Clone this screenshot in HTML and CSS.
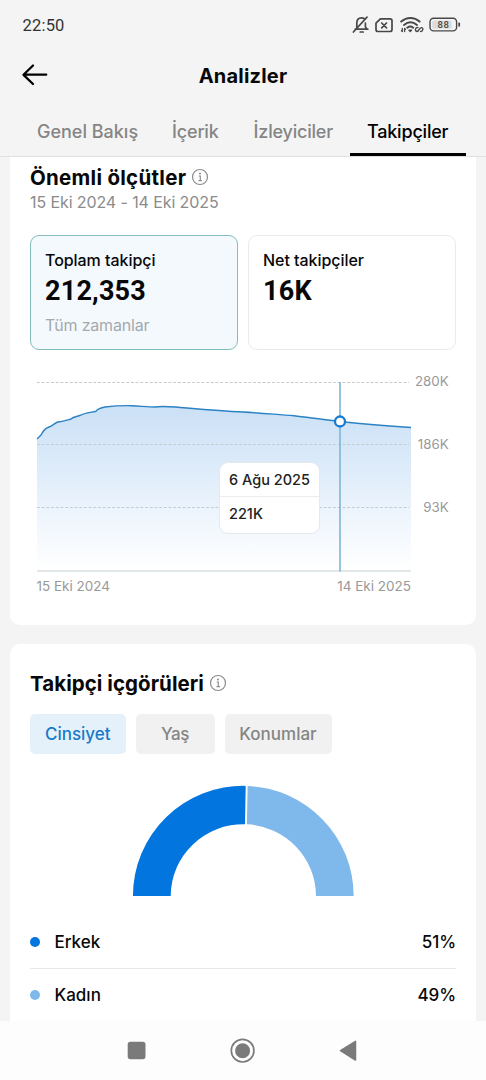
FILE: index.html
```
<!DOCTYPE html>
<html lang="tr">
<head>
<meta charset="utf-8">
<title>Analizler</title>
<link rel="stylesheet" href="styles.css">
</head>
<body>
<div class="screen">
  <div class="status">
    <span class="clock">22:50</span>
    <svg class="status-icons" width="110" height="20" viewBox="0 0 110 20" fill="none" stroke="#484848" stroke-width="1.7" stroke-linecap="round" stroke-linejoin="round">
      <path d="M3.2 14.2H15.8M4.8 14V8c0-3.2 2-5.2 4.8-5.2 1.2 0 2 .3 2.8.8M13.4 8.2V12l1.6 2M1.4 17L15 2.2M8.2 17h3"/>
      <path d="M28.4 3.8H38q2 0 2 2V14.500q0 2-2 2H26q-2 0-2-2V8.200z"/>
      <path d="M29.700 8l4.800 4.800M34.500 8l-4.800 4.800"/>
      <path stroke-width="2" d="M49.200 6.600c5.500-4.800 13-4.800 18.400 0M52 9.900c4-3.300 9-3.300 13 0M55.200 12.700c2-1.400 4.200-1.400 6 0"/>
      <path stroke-width="1.3" d="M50.300 13.500V16.500M50.300 16.500l-.8-.8M52.600 16.500V13.500M52.600 13.500l.8.8"/>
      <path fill="#484848" stroke-width="1" d="M57 15h3l-1.500 1.800z"/>
      <path stroke-width="1.400" d="M66 12.600c-2.500-.6-3.800 3.300-1 3.900 2.100 0 2-3.500 4.200-3.900 2.400 0 2.200 3.800-.6 3.900"/>
      <rect x="78" y="3.300" width="26.600" height="12.600" rx="3.600" stroke-width="1.400"/>
      <rect x="80.200" y="5.500" width="19.500" height="8.200" rx="1.500" fill="#dcdcdc" stroke="none"/>
      <path stroke-width="1.800" d="M107.200 8.500v2.300"/>
      <text class="battery-text" x="91.400" y="13.100" text-anchor="middle">88</text>
    </svg>
  </div>

  <header class="header">
    <svg class="back" width="28" height="24" viewBox="0 0 28 24" fill="none" stroke="#000" stroke-width="2.300" stroke-linecap="round" stroke-linejoin="round"><path d="M12 2.500L2.500 11.800l9.500 9.200M2.800 11.700H25.200"/></svg>
    <h1 class="header-title">Analizler</h1>
  </header>

  <nav class="tabs">
    <span class="tab">Genel Bakış</span>
    <span class="tab tab-content">İçerik</span>
    <span class="tab tab-viewers">İzleyiciler</span>
    <span class="tab tab-active">Takipçiler</span>
  </nav>

  <main class="content">
    <section class="card card-metrics">
      <div class="title-row">
        <h2 class="title title-metrics">Önemli ölçütler</h2>
        <svg class="info" width="18" height="18" viewBox="0 0 18 18"><circle cx="9" cy="9" r="7.500" fill="none" stroke="#8b8b8b" stroke-width="1.200"/><path d="M7.700 8h1.600v4.500M7.500 12.600h3.400" fill="none" stroke="#8b8b8b" stroke-width="1.100"/><circle cx="9" cy="5.500" r="1" fill="#8b8b8b"/></svg>
      </div>
      <p class="range">15 Eki 2024 - 14 Eki 2025</p>
      <div class="metrics">
        <div class="metric metric-selected">
          <span class="metric-label">Toplam takipçi</span>
          <span class="metric-value">212,353</span>
          <span class="metric-sub">Tüm zamanlar</span>
        </div>
        <div class="metric">
          <span class="metric-label">Net takipçiler</span>
          <span class="metric-value">16K</span>
        </div>
      </div>
      <div class="chart">
        <svg class="plot" width="426" height="230" viewBox="30 370 426 230">
          <defs>
            <linearGradient id="fill" x1="0" y1="405" x2="0" y2="571" gradientUnits="userSpaceOnUse">
              <stop offset="0" stop-color="#cbe0f6"/>
              <stop offset=".4" stop-color="#deecfa"/>
              <stop offset=".7" stop-color="#f0f6fd"/>
              <stop offset="1" stop-color="#fff"/>
            </linearGradient>
          </defs>
          <path fill="url(#fill)" d="M37 439L41 435C43 432 44 428.500 49 427C53 426 55 422 59 421.700C63 421.500 68 419.800 71 419C73 416.700 77 416.500 80 415.500C84 413 90 412.500 96 411.200C98 408.500 100 407.800 105 407C113 406 124 405.500 132 405.700C140 406 148 407 155 407C160 406 168 406.500 176 407C194 408.500 218 410.800 243 412C264 413.200 276 414.500 294 415.700C309 417.500 322 419.500 340 421.500C364 424.300 388 426 411 427.500V571H37Z"/>
          <g stroke="#c3cbd1" stroke-width="1" stroke-dasharray="2.800 1.900">
            <path d="M37 382.500H409"/><path d="M37 444.500H409"/><path d="M37 507.500H409"/>
          </g>
          <path fill="none" stroke="#2b83c3" stroke-width="1.400" d="M37 439L41 435C43 432 44 428.500 49 427C53 426 55 422 59 421.700C63 421.500 68 419.800 71 419C73 416.700 77 416.500 80 415.500C84 413 90 412.500 96 411.200C98 408.500 100 407.800 105 407C113 406 124 405.500 132 405.700C140 406 148 407 155 407C160 406 168 406.500 176 407C194 408.500 218 410.800 243 412C264 413.200 276 414.500 294 415.700C309 417.500 322 419.500 340 421.500C364 424.300 388 426 411 427.500"/>
          <path d="M37 571H411" stroke="#d9dfe3" stroke-width="1.500"/>
          <path d="M340 382V571.500" stroke="#7db6d6" stroke-width="1.600"/>
          <circle cx="340" cy="421.500" r="5" fill="#fff" stroke="#187bd0" stroke-width="2.300"/>
          <g class="axis">
            <text class="axis-y" x="448.800" y="386" text-anchor="end">280K</text>
            <text class="axis-y" x="448.800" y="449" text-anchor="end">186K</text>
            <text class="axis-y" x="448.800" y="512" text-anchor="end">93K</text>
            <text x="36.500" y="590.700">15 Eki 2024</text>
            <text x="411" y="590.700" text-anchor="end">14 Eki 2025</text>
          </g>
        </svg>
        <div class="tooltip">
          <div class="tooltip-date">6 Ağu 2025</div>
          <div class="tooltip-value">221K</div>
        </div>
      </div>
    </section>

    <section class="card card-insights">
      <div class="title-row">
        <h2 class="title title-insights">Takipçi içgörüleri</h2>
        <svg class="info" width="18" height="18" viewBox="0 0 18 18"><circle cx="9" cy="9" r="7.500" fill="none" stroke="#8b8b8b" stroke-width="1.200"/><path d="M7.700 8h1.600v4.500M7.500 12.600h3.400" fill="none" stroke="#8b8b8b" stroke-width="1.100"/><circle cx="9" cy="5.500" r="1" fill="#8b8b8b"/></svg>
      </div>
      <div class="chips">
        <span class="chip chip-gender">Cinsiyet</span>
        <span class="chip chip-age">Yaş</span>
        <span class="chip chip-places">Konumlar</span>
      </div>
      <svg class="donut" width="224" height="112" viewBox="131 785 224 112">
        <path fill="#0375de" d="M132.900 896A110.400 110.200 0 0 1 245.700 785.900L245 824.200A72.700 72.200 0 0 0 170.700 896Z"/>
        <path fill="#7fb9eb" d="M247.600 786A110.400 110.200 0 0 1 353.700 896H316A72.700 72.200 0 0 0 246.900 824.200Z"/>
      </svg>
      <ul class="legend">
        <li class="legend-row"><i class="dot dot-male"></i><span class="legend-name">Erkek</span><span class="legend-value">51%</span></li>
        <li class="legend-row"><i class="dot dot-female"></i><span class="legend-name">Kadın</span><span class="legend-value">49%</span></li>
      </ul>
    </section>
  </main>

  <footer class="navbar">
    <svg width="19" height="24" viewBox="0 0 19 24"><rect x=".700" y="2.700" width="17.800" height="17.600" rx="2.800" fill="#7a7a7a"/></svg>
    <svg width="26" height="26" viewBox="0 0 26 26"><circle cx="12.600" cy="12.700" r="11.300" fill="none" stroke="#7a7a7a" stroke-width="1.700"/><circle cx="12.600" cy="12.700" r="7.500" fill="#7a7a7a"/></svg>
    <svg width="19" height="24" viewBox="0 0 19 24"><path d="M1.500 11.700L16.500 2.400V21Z" fill="#7a7a7a" stroke="#7a7a7a" stroke-width="1.500" stroke-linejoin="round"/></svg>
  </footer>
</div>
</body>
</html>
```
FILE: styles.css
```
* { box-sizing: border-box; margin: 0; padding: 0; }

body {
  background: #f4f4f4;
  font-family: Inter, Roboto, sans-serif;
  color: #080808;
}

.screen {
  display: flex;
  flex-direction: column;
  width: 486px;
  height: 1080px;
  overflow: hidden;
}

/* Status bar */
.status {
  display: flex;
  justify-content: space-between;
  align-items: center;
  height: 50px;
  padding: 0 24.500px 0 22.500px;
}
.clock {
  font: 400 16.500px/20px Roboto, sans-serif;
  letter-spacing: .2px;
  padding-top: 1px;
  color: #333;
}
.battery-text {
  font: 500 9.500px Roboto, sans-serif;
  letter-spacing: .4px;
  fill: #484848;
  stroke: none;
}

/* Header */
.header {
  display: grid;
  grid-template-columns: 28px 1fr 28px;
  align-items: center;
  height: 50px;
  padding: 0 21px;
}
.header-title {
  font-size: 20px;
  font-weight: 700;
  line-height: 24px;
  letter-spacing: .2px;
  text-align: center;
  padding-top: 1px;
}

/* Tabs */
.tabs {
  display: flex;
  height: 57px;
  padding: 0 19px;
  border-bottom: 1.500px solid #e0e0e0;
}
.tab {
  padding: 20px 17px 0 18px;
  font-size: 18px;
  line-height: 24px;
  font-weight: 450;
  letter-spacing: 0;
  color: #858585;
  white-space: nowrap;
}
.tab-content { padding-left: 17px; letter-spacing: -.2px; }
.tab-viewers { letter-spacing: -.2px; }
.tab-active {
  padding: 20px 18px 0 17px;
  border-bottom: 3px solid #000;
  color: #000;
  font-weight: 500;
  letter-spacing: -.2px;
}

/* Cards */
.content {
  flex: 1;
  display: flex;
  flex-direction: column;
  gap: 19px;
  padding: 0 10px;
}
.card { background: #fff; padding: 0 20px; }
.card-metrics { height: 468px; padding-top: 7px; border-radius: 0 0 10px 10px; }
.card-insights { height: 377px; padding-top: 26px; border-radius: 10px 10px 0 0; }
.title-row { display: flex; align-items: center; gap: 5px; height: 26px; }
.title {
  font-size: 20.500px;
  line-height: 26px;
  font-weight: 700;
  white-space: nowrap;
}
.title-metrics { padding-top: 1px; letter-spacing: .28px; }
.title-insights { padding-top: 1px; letter-spacing: .05px; }
.info { margin-bottom: 1px; }
.range {
  height: 20px;
  margin-top: 3px;
  font-size: 16px;
  line-height: 19px;
  letter-spacing: -.1px;
  color: #8b8b8b;
}

/* Metric tiles */
.metrics {
  display: grid;
  grid-template-columns: 208px 208px;
  justify-content: space-between;
  margin-top: 22px;
}
.metric {
  display: flex;
  flex-direction: column;
  height: 115px;
  padding: 13px 14px 0;
  border: 1px solid #ebebeb;
  border-radius: 9px;
}
.metric-selected { background: #f4f9fe; border-color: #83bdbc; }
.metric-label { font-size: 16px; line-height: 22px; font-weight: 450; letter-spacing: -.05px; }
.metric-value { margin-top: 4px; font: 700 27px/32px Roboto, sans-serif; letter-spacing: .2px; }
.metric-sub { margin-top: 7px; font-size: 16px; line-height: 22px; letter-spacing: -.2px; color: #a5a9ac; }

/* Chart */
.chart { position: relative; height: 230px; margin-top: 20px; }
.plot { display: block; }
.axis { font-size: 13.500px; fill: #999; }
.axis-y { font-size: 13.300px; letter-spacing: .05px; }
.tooltip {
  position: absolute;
  left: 189px;
  top: 92px;
  width: 101px;
  height: 72px;
  background: #fff;
  border: 1px solid #e4e9ed;
  border-radius: 9px;
  font-size: 14.500px;
  font-weight: 500;
  line-height: 34px;
  color: #222;
  white-space: nowrap;
}
.tooltip-date { height: 34px; padding-left: 9px; border-bottom: 1px solid #ececec; }
.tooltip-value { padding-left: 9px; }

/* Insights */
.chips { display: flex; gap: 10px; margin-top: 18px; }
.chip {
  height: 39.500px;
  border-radius: 5px;
  background: #f1f1f1;
  color: #858585;
  font-size: 17px;
  font-weight: 450;
  line-height: 40px;
  text-align: center;
}
.chip-gender { width: 95.500px; background: #e4f1fb; color: #177ac8; font-weight: 500; }
.chip-age { width: 79px; letter-spacing: -.5px; }
.chip-places { width: 107px; }
.donut { display: block; margin: 31.500px 0 0 101px; }

.legend { list-style: none; margin-top: 18px; }
.legend-row {
  display: flex;
  align-items: center;
  height: 53.500px;
  font-size: 17px;
  font-weight: 450;
}
.legend-row:first-child { padding-top: 1px; border-bottom: 1px solid #e8e8e8; }
.dot { width: 10px; height: 10px; border-radius: 50%; }
.dot-male { background: #0375de; }
.dot-female { background: #7fb9eb; }
.legend-name { flex: 1; margin-left: 14.500px; }
.legend-value { font-weight: 450; letter-spacing: -.1px; }

/* System navigation */
.navbar {
  display: flex;
  align-items: center;
  justify-content: space-between;
  height: 59px;
  padding: 0 128px 0 127px;
  background: #fdfdfd;
}
```
